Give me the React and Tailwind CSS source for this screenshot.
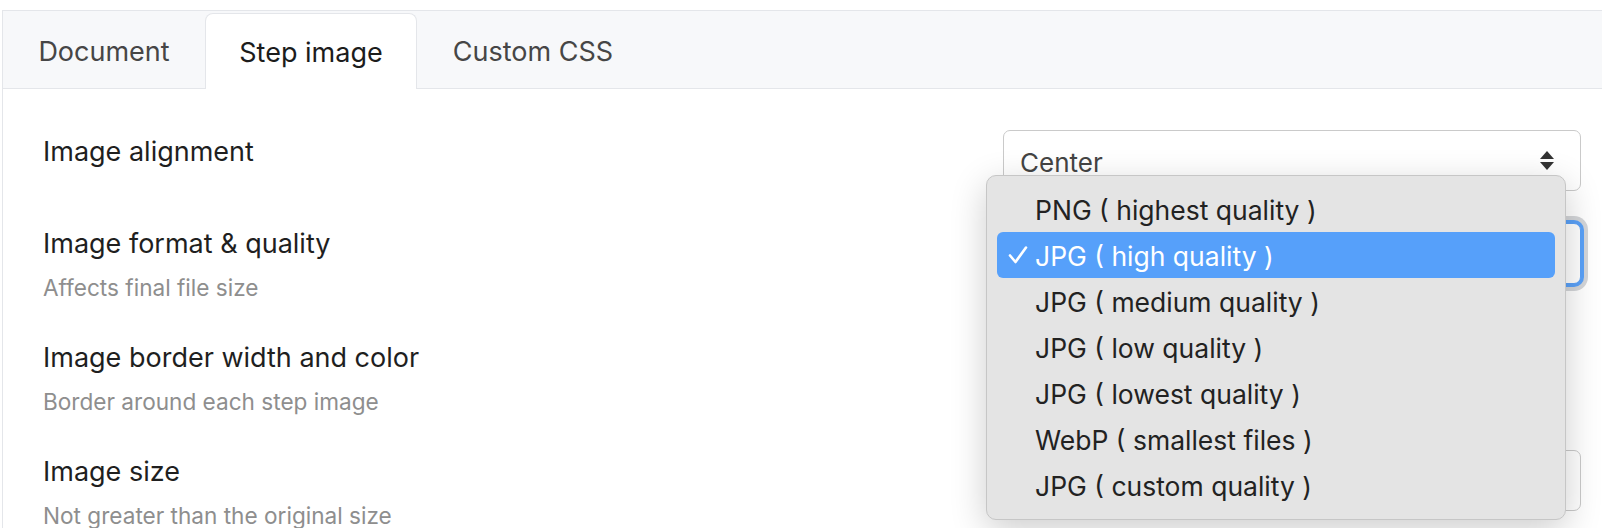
import React from 'react';

const tabs = [
  { label: 'Document', width: 'w-[202px]' },
  { label: 'Step image', width: 'w-[212px]', active: true },
  { label: 'Custom CSS', width: 'w-[232px]' },
];

const formats = [
  'PNG ( highest quality )',
  'JPG ( high quality )',
  'JPG ( medium quality )',
  'JPG ( low quality )',
  'JPG ( lowest quality )',
  'WebP ( smallest files )',
  'JPG ( custom quality )',
];

const UpDown = () => (
  <svg width="16" height="22" viewBox="0 0 16 22" className="text-[#333]">
    <path d="M8 1 L15 9 L1 9 Z" fill="currentColor" />
    <path d="M1 12 L15 12 L8 20 Z" fill="currentColor" />
  </svg>
);

// value is left out where the open menu covers the box
const Select = ({ value, focused }) => (
  <div
    className={`h-[61px] w-[578px] bg-white border rounded-[7px] flex items-center justify-between pl-[16px] pr-[25px] ${
      focused
        ? 'border-[#5aa1f8] ring-[3px] ring-[#5aa1f8] shadow-[0_0_0_7px_#d4d6d9]'
        : 'border-[#cacaca]'
    }`}
  >
    <span className="pt-[3px] text-[26px] text-[#444]">{value}</span>
    <UpDown />
  </div>
);

const Row = ({ label, hint, height, children }) => (
  <div className={`flex justify-between pl-[40px] pr-[21px] ${height}`}>
    <div>
      <div className="mt-[6px] text-[27px] leading-[32px] text-[#1f1f1f]">{label}</div>
      {hint && <div className="mt-[14px] text-[22.6px] leading-[28px] text-[#8e8e8e]">{hint}</div>}
    </div>
    {children}
  </div>
);

const FormatMenu = () => (
  <div className="absolute left-[986px] top-[175px] w-[580px] h-[345px] bg-[#e4e4e4] border border-[#c6c6c6] rounded-[10px] shadow-[0_10px_36px_rgba(0,0,0,0.2)] px-[10px] pt-[10px]">
    {formats.map((f, i) => (
      <div
        key={f}
        className={`relative h-[46px] flex items-center pl-[38px] pt-[3px] text-[26.5px] rounded-[6px] ${
          i === 1 ? 'bg-[#56a0fa] text-white' : 'text-[#222]'
        }`}
      >
        {i === 1 && (
          <svg width="20" height="18" viewBox="0 0 20 18" className="absolute left-[11px] top-[14px]">
            <path d="M2 9.5 L7.5 16 L18 1.5" fill="none" stroke="white" strokeWidth="2.6" strokeLinecap="round" strokeLinejoin="round" />
          </svg>
        )}
        {f}
      </div>
    ))}
  </div>
);

export default function App() {
  return (
    <div className="relative w-[1602px] h-[528px] overflow-hidden bg-white font-['Inter',sans-serif]">
      <div className="pt-[10px]">
        <div className="ml-[2px] border-t border-l border-[#e4e6ea] h-[518px]">
          <div className="flex h-[78px] bg-[#f7f8fa] border-b border-[#e4e6ea]">
            {tabs.map((t) =>
              t.active ? (
                <div
                  key={t.label}
                  className={`${t.width} mt-[2px] -mb-px h-[76px] pt-[3px] bg-white border border-b-0 border-[#e4e6ea] rounded-t-[8px] flex items-center justify-center text-[27px] text-[#1c1c1c]`}
                >
                  {t.label}
                </div>
              ) : (
                <div
                  key={t.label}
                  className={`${t.width} pt-[5px] flex items-center justify-center text-[27px] text-[#464646]`}
                >
                  {t.label}
                </div>
              )
            )}
          </div>

          <div className="pt-[41px]">
            <Row label="Image alignment" height="h-[92px]">
              <Select value="Center" />
            </Row>
            <Row label="Image format & quality" hint="Affects final file size" height="h-[114px]">
              <div className="pt-px">
                <Select focused />
              </div>
            </Row>
            <Row label="Image border width and color" hint="Border around each step image" height="h-[114px]" />
            <Row label="Image size" hint="Not greater than the original size" height="h-[120px]">
              <Select />
            </Row>
          </div>
        </div>
      </div>
      <FormatMenu />
    </div>
  );
}
